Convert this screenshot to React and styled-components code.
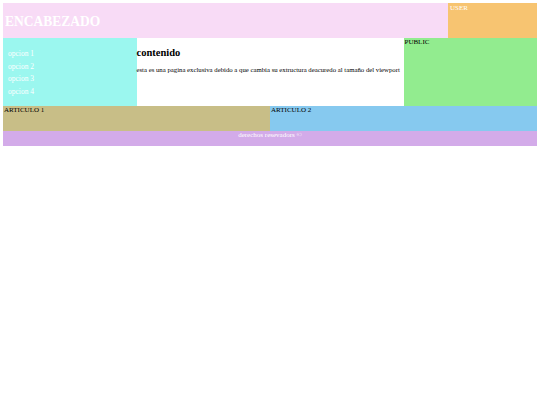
import React from "react";
import styled, { createGlobalStyle } from "styled-components";

const GlobalStyle = createGlobalStyle`
  body {
    margin: 3px;
    font-family: "Liberation Serif", "Times New Roman", serif;
    background: #fff;
  }
`;

const Layout = styled.div`
  display: grid;
  grid-template-columns: repeat(12, 1fr);
  grid-template-rows: 35px 68px 25px 15px;
  width: 534px;
`;

const Header = styled.header`
  grid-column: 1 / 11;
  background-color: #f8dbf6;
  display: flex;
  align-items: center;
  padding-left: 2px;

  h1 {
    margin: 0;
    color: #fff;
    font-size: 13.5px;
    font-weight: bold;
    transform: scaleY(1.15);
  }
`;

const User = styled.div`
  grid-column: 11 / 13;
  background-color: #f7c471;
  color: #fff;
  font-size: 7px;
  padding: 1px 2px;
`;

const Sidebar = styled.nav`
  grid-column: 1 / 4;
  background-color: #9bf7ef;
  padding: 11px 5px;
  display: flex;
  flex-direction: column;
  gap: 3.5px;

  span {
    color: #fff;
    font-size: 7.5px;
  }
`;

const Content = styled.main`
  grid-column: 4 / 10;
  padding: 9px 0 0 0;

  h2 {
    margin: 0 0 8px;
    font-size: 10.5px;
  }

  p {
    margin: 0;
    font-size: 6.75px;
    white-space: nowrap;
  }
`;

const Public = styled.aside`
  grid-column: 10 / 13;
  background-color: #92ec8f;
  font-size: 7px;
  padding: 0 1px;
`;

const Article = styled.section`
  grid-column: span 6;
  background-color: ${(p) => p.bg};
  font-size: 7px;
  padding: 0 1px;
`;

const Footer = styled.footer`
  grid-column: 1 / 13;
  background-color: #d3abe9;
  color: #fff;
  font-size: 7px;
  text-align: center;
`;

export default function App() {
  return (
    <>
      <GlobalStyle />
      <Layout>
        <Header>
          <h1>ENCABEZADO</h1>
        </Header>
        <User>USER</User>
        <Sidebar>
          <span>opcion 1</span>
          <span>opcion 2</span>
          <span>opcion 3</span>
          <span>opcion 4</span>
        </Sidebar>
        <Content>
          <h2>contenido</h2>
          <p>
            esta es una pagina exclusiva debido a que cambia su extructura
            deacuredo al tamaño del viewport
          </p>
        </Content>
        <Public>PUBLIC</Public>
        <Article bg="#c8be87">ARTICULO 1</Article>
        <Article bg="#86c9ef">ARTICULO 2</Article>
        <Footer>derechos resevadors ©</Footer>
      </Layout>
    </>
  );
}
